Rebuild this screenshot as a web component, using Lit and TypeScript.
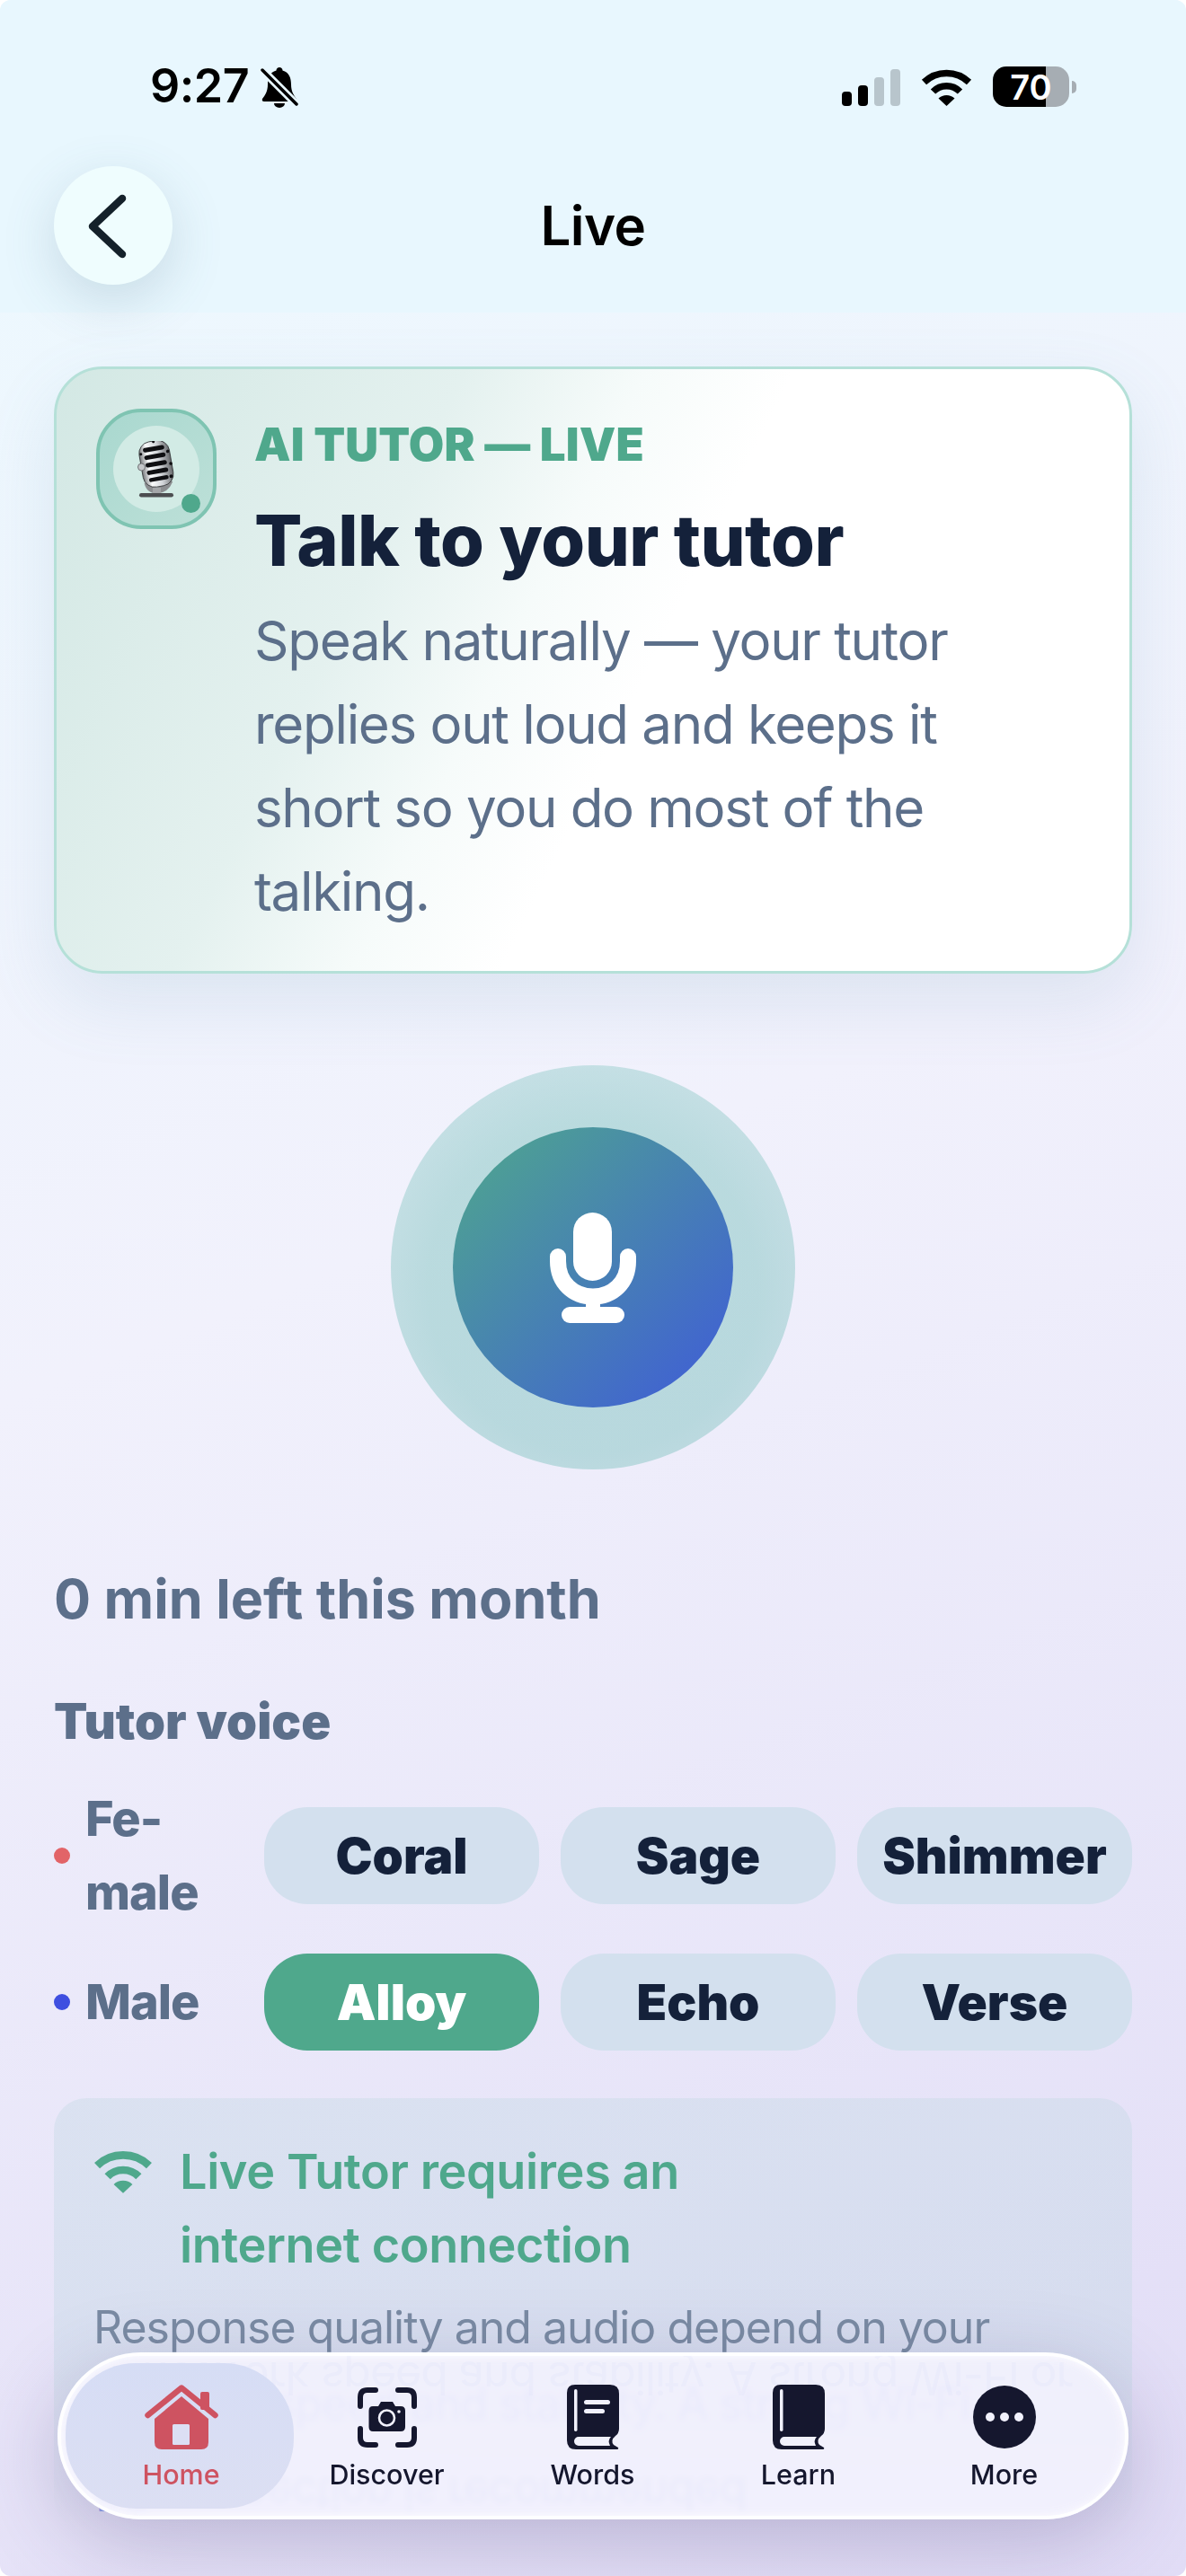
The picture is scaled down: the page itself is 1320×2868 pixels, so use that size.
import { LitElement, html, svg, css } from 'lit';
import { customElement } from 'lit/decorators.js';

const wifiIcon = () => html`
  <svg class="wifi" viewBox="0 0 57 42">
    <path d="M3.5 15.5A36 36 0 0 1 53.5 15.5" fill="none" stroke="currentColor" stroke-width="7.5" />
    <path d="M13.5 26A21 21 0 0 1 43.5 26" fill="none" stroke="currentColor" stroke-width="7.5" />
    <path d="M28.5 42L19.5 33.5A13 13 0 0 1 37.5 33.5Z" fill="currentColor" />
  </svg>
`;

const bookIcon = (lines: boolean) => html`
  <svg class="book" viewBox="0 0 58 72">
    <path d="M9 0H48Q58 0 58 10V49Q58 54 54 57Q48 62 52 67L57 70Q58 72 55 72H10Q0 72 0 62V9Q0 0 9 0Z" fill="#15172e" />
    <path d="M13 58H49Q45 62 48 68H13A5 5 0 0 1 13 58Z" fill="#f1f1fc" />
    <rect x="8" y="5" width="3.5" height="47" rx="1.75" fill="#f1f1fc" />
    ${lines
      ? svg`<rect x="19" y="17" width="29" height="5" rx="2.5" fill="#f1f1fc" />
            <rect x="19" y="27" width="23" height="5" rx="2.5" fill="#f1f1fc" />`
      : ''}
  </svg>
`;

const navItems = [
  {
    label: 'Home',
    active: true,
    icon: html`
      <svg class="home" viewBox="0 0 82 72">
        <rect x="62" y="8" width="10" height="20" rx="2" fill="#ce5361" />
        <path d="M3.5 34L41 3.5L78.5 34" fill="none" stroke="#ce5361" stroke-width="6.5" stroke-linecap="round" stroke-linejoin="round" />
        <path d="M41 13L71 38V64Q71 72 63 72H19Q11 72 11 64V38Z" fill="#ce5361" />
        <rect x="31" y="44" width="19" height="23" rx="1.5" fill="#dcdff4" />
      </svg>
    `,
  },
  {
    label: 'Discover',
    icon: html`
      <svg class="scan" viewBox="0 0 66 67">
        <g fill="none" stroke="#15172e" stroke-width="6" stroke-linecap="round">
          <path d="M3 21V11Q3 3 11 3H20" />
          <path d="M45 3H55Q63 3 63 11V21" />
          <path d="M3 46V56Q3 64 11 64H20" />
          <path d="M45 64H55Q63 64 63 56V46" />
        </g>
        <path d="M17 21H23L26 16H39L42 21H48Q53 21 53 26V44Q53 49 48 49H17Q12.500 49 12.500 44V26Q12.500 21 17 21Z" fill="#15172e" />
        <circle cx="32.500" cy="34" r="8.500" fill="#15172e" stroke="#f1f1fc" stroke-width="2.600" />
        <circle cx="46" cy="27" r="1.800" fill="#f1f1fc" />
      </svg>
    `,
  },
  { label: 'Words', icon: bookIcon(true) },
  { label: 'Learn', icon: bookIcon(false) },
  {
    label: 'More',
    icon: html`
      <svg class="more" viewBox="0 0 70 70">
        <circle cx="35" cy="35" r="35" fill="#15172e" />
        <circle cx="19" cy="35" r="5" fill="#f1f1fc" />
        <circle cx="35" cy="35" r="5" fill="#f1f1fc" />
        <circle cx="51" cy="35" r="5" fill="#f1f1fc" />
      </svg>
    `,
  },
];

@customElement('app-root')
export class AppRoot extends LitElement {
  static styles = css`
    :host {
      display: block;
      font-family: Inter, "Liberation Sans", sans-serif;
    }

    * {
      box-sizing: border-box;
    }

    svg {
      display: block;
      flex: none;
    }

    .page {
      position: relative;
      height: 2868px;
      overflow: hidden;
      border-radius: 12px;
      background: linear-gradient(158deg, #edf8fe 8%, #f1f1fc 46%, #e1dcf6 100%);
    }

    /* header */
    .header {
      height: 348px;
      padding-top: 74px;
      background: #e8f7fe;
    }

    .status {
      display: flex;
      align-items: flex-start;
      height: 48px;
      padding: 0 130px 0 167px;
    }

    .time {
      font-size: 52px;
      font-weight: 600;
      line-height: 44px;
      color: #000;
      letter-spacing: -0.5px;
    }

    .bell {
      width: 42px;
      height: 46px;
      margin-left: 13px;
    }

    .status-right {
      display: flex;
      align-items: center;
      gap: 23px;
      margin-left: auto;
    }

    .signal {
      width: 65px;
      height: 41px;
      margin-top: 2px;
    }

    .status .wifi {
      width: 57px;
      height: 42px;
      color: #000;
      margin-top: 1px;
    }

    .battery {
      position: relative;
      display: flex;
      align-items: center;
      justify-content: center;
      width: 85px;
      height: 45px;
      border-radius: 15px;
      background: linear-gradient(90deg, #000 70%, #a6adb3 70%);
      color: #fff;
      font-size: 38px;
      font-weight: 600;
    }

    .battery::after {
      content: "";
      position: absolute;
      left: 88px;
      top: 16px;
      width: 5px;
      height: 14px;
      border-radius: 0 5px 5px 0;
      background: #a6adb3;
    }

    .topbar {
      display: grid;
      grid-template-columns: 132px 1fr 132px;
      align-items: center;
      margin-top: 63px;
      padding: 0 60px;
    }

    .back {
      width: 132px;
      height: 132px;
      border-radius: 50%;
      background: #effdfe;
      box-shadow: 0 18px 60px rgba(70, 110, 130, 0.2);
    }

    .title {
      text-align: center;
      font-size: 60px;
      font-weight: 600;
      color: #000;
      letter-spacing: -0.5px;
    }

    /* content */
    .main {
      padding: 60px 60px 0;
    }

    .card {
      display: flex;
      gap: 42px;
      height: 676px;
      padding: 44px 84px 0 44px;
      border: 3px solid #b5e0d8;
      border-radius: 54px;
      background: linear-gradient(116deg, #d3e8e4 0%, #e4f1ef 30%, #f6fbfa 43%, #fff 54%);
      box-shadow: 0 30px 80px rgba(90, 140, 170, 0.14);
    }

    .card-icon {
      position: relative;
      display: flex;
      align-items: center;
      justify-content: center;
      width: 134px;
      height: 134px;
      flex: none;
      border: 4px solid #7fc4b2;
      border-radius: 50px;
      background: linear-gradient(135deg, #a9d8cf, #bde0d8);
    }

    .card-icon-inner {
      display: flex;
      align-items: center;
      justify-content: center;
      width: 96px;
      height: 96px;
      border-radius: 50%;
      background: #d2ebe5;
    }

    .mic-emoji {
      width: 43px;
      height: 63px;
    }

    .live-dot {
      position: absolute;
      right: 14px;
      bottom: 14px;
      width: 21px;
      height: 21px;
      border-radius: 50%;
      background: #4fa88c;
    }

    .kicker {
      font-size: 51px;
      font-weight: 900;
      line-height: 80px;
      color: #4fa88c;
      white-space: nowrap;
      letter-spacing: 0.2px;
    }

    .headline {
      font-size: 79px;
      font-weight: 800;
      line-height: 132px;
      color: #14213a;
      white-space: nowrap;
      letter-spacing: -0.5px;
    }

    .lead {
      margin: 0;
      font-size: 60px;
      line-height: 93px;
      color: #5c6f8a;
      letter-spacing: -1.3px;
    }

    .mic-outer {
      display: flex;
      align-items: center;
      justify-content: center;
      width: 450px;
      height: 450px;
      margin: 102px auto 0;
      border-radius: 50%;
      background: radial-gradient(circle at 50% 55%, rgba(79, 175, 165, 0.34) 55%, rgba(79, 175, 165, 0.18) 100%);
    }

    .mic-btn {
      display: flex;
      align-items: center;
      justify-content: center;
      width: 312px;
      height: 312px;
      border-radius: 50%;
      background: linear-gradient(135deg, #4fa88c 0%, #3f5bd9 100%);
    }

    .mic-btn svg {
      width: 96px;
      height: 123px;
    }

    .minutes {
      margin-top: 104px;
      font-size: 61px;
      font-weight: 700;
      line-height: 80px;
      color: #5c6f8a;
    }

    .voice-title {
      margin-top: 61px;
      font-size: 54.5px;
      font-weight: 900;
      line-height: 70px;
      color: #5c6f8a;
    }

    .voices {
      display: grid;
      grid-template-columns: 210px repeat(3, 306px);
      column-gap: 24px;
      row-gap: 27px;
      align-items: center;
      margin-top: 33px;
    }

    .voice-label {
      display: flex;
      align-items: center;
      gap: 17px;
      font-size: 54px;
      font-weight: 800;
      line-height: 82px;
      color: #5c6f8a;
      letter-spacing: -1px;
    }

    .voice-label i {
      width: 18px;
      height: 18px;
      flex: none;
      border-radius: 50%;
    }

    .female {
      background: #e26468;
    }

    .male {
      background: #3f4fe0;
    }

    .pill {
      height: 108px;
      border-radius: 48px;
      background: #d3e0ee;
      font-size: 55px;
      font-weight: 900;
      line-height: 108px;
      text-align: center;
      color: #14213a;
      white-space: nowrap;
    }

    .pill.selected {
      background: #4fa88c;
      color: #fff;
    }

    .info {
      height: 480px;
      margin-top: 53px;
      padding: 41px 44px 0;
      border-radius: 36px;
      background: linear-gradient(180deg, rgba(190, 215, 225, 0.35) 65%, rgba(190, 215, 225, 0) 100%);
    }

    .info-head {
      display: flex;
      gap: 30px;
      font-size: 54px;
      font-weight: 600;
      line-height: 82px;
      color: #4fa88c;
      letter-spacing: -0.4px;
    }

    .info-head .wifi {
      width: 66px;
      height: 49px;
      margin-top: 16px;
    }

    .info-body {
      margin: 8px 0 0;
      font-size: 50px;
      line-height: 85px;
      color: #7a8ba3;
      white-space: nowrap;
      letter-spacing: -1px;
    }

    .info-body span {
      display: block;
    }

    .info-body .under {
      color: rgba(110, 140, 230, 0.7);
    }

    .flipped {
      transform: translateY(15px) scaleY(-1);
    }

    /* floating tab bar */
    .tabbar {
      position: absolute;
      left: 64px;
      right: 64px;
      bottom: 63px;
      display: flex;
      height: 186px;
      padding: 0 19px;
      overflow: hidden;
      border: 4px solid rgba(255, 255, 255, 0.9);
      border-radius: 93px;
      background: rgba(242, 241, 253, 0.92);
      backdrop-filter: blur(3px);
      box-shadow: 0 24px 90px rgba(60, 50, 110, 0.26), inset 0 0 12px rgba(255, 255, 255, 0.8);
    }

    .echo {
      position: absolute;
      left: 90px;
      top: 0;
      font-size: 50px;
      line-height: 50px;
      color: rgba(110, 140, 230, 0.04);
      transform: scaleY(-1);
      white-space: nowrap;
      letter-spacing: -1px;
    }

    .tab {
      position: relative;
      display: flex;
      flex-direction: column;
      align-items: center;
      width: 229px;
      padding-top: 29px;
      font-size: 30.5px;
      font-weight: 500;
      line-height: 40px;
      color: #15172e;
    }

    .tab.active {
      color: #ce5361;
    }

    .tab.active::before {
      content: "";
      position: absolute;
      left: -14px;
      right: -11px;
      top: 8px;
      bottom: 8px;
      border-radius: 78px;
      background: linear-gradient(180deg, #d6ddf5, #dcdff3);
    }

    .tab-icon {
      position: relative;
      display: flex;
      align-items: center;
      justify-content: center;
      height: 78px;
      margin-bottom: 5px;
    }

    .tab span {
      position: relative;
    }

    .home {
      width: 82px;
      height: 72px;
    }

    .scan {
      width: 66px;
      height: 67px;
    }

    .book {
      width: 58px;
      height: 72px;
    }

    .more {
      width: 70px;
      height: 70px;
    }
  `;

  renderStatus() {
    return html`
      <div class="status">
        <span class="time">9:27</span>
        <svg class="bell" viewBox="0 0 42 46">
          <path d="M21 1C19 1 17.500 2.500 17.500 4.500C10 6.500 8 13 8 20C8 28 5 32 2 36Q1 39 4 39H38Q41 39 40 36C37 32 34 28 34 20C34 13 32 6.500 24.500 4.500C24.500 2.500 23 1 21 1Z" />
          <path d="M15 41A6 5 0 0 0 27 41Z" />
          <path d="M1 3L41 43" stroke="#e8f7fe" stroke-width="9" />
          <path d="M2 4L40 42" stroke="#000" stroke-width="3.500" stroke-linecap="round" />
        </svg>
        <div class="status-right">
          <svg class="signal" viewBox="0 0 65 41">
            <rect x="0" y="25" width="11" height="16" rx="4" />
            <rect x="18" y="18" width="11" height="23" rx="4" />
            <rect x="36" y="9" width="11" height="32" rx="4" fill="#b8c5cc" />
            <rect x="54" y="0" width="11" height="41" rx="4" fill="#b8c5cc" />
          </svg>
          ${wifiIcon()}
          <div class="battery">70</div>
        </div>
      </div>
    `;
  }

  renderCard() {
    return html`
      <section class="card">
        <div class="card-icon">
          <div class="card-icon-inner">
            <svg class="mic-emoji" viewBox="0 0 43 63">
              <defs>
                <linearGradient id="chrome" x1="0" y1="0" x2="1" y2="0">
                  <stop offset="0" stop-color="#77797c" />
                  <stop offset="0.25" stop-color="#fafbfc" />
                  <stop offset="0.6" stop-color="#d3d6da" />
                  <stop offset="1" stop-color="#66686b" />
                </linearGradient>
              </defs>
              <path d="M11 46Q13 55 22 55Q32 54 36 44" fill="none" stroke="#8b8d90" stroke-width="7" />
              <rect x="17" y="52" width="9" height="7" fill="#a4a6a9" />
              <rect x="2" y="58" width="38" height="4.500" rx="2.200" fill="#4c4e51" />
              <g transform="rotate(-10 20 26)">
                <rect x="4" y="0" width="34" height="51" rx="13" fill="url(#chrome)" stroke="#2e2f31" stroke-width="0.800" />
                <rect x="9" y="6" width="24" height="5" rx="2.500" fill="#0f0f12" />
                <rect x="9" y="14.500" width="24" height="5" rx="2.500" fill="#0f0f12" />
                <rect x="9" y="23" width="24" height="5" rx="2.500" fill="#0f0f12" />
                <rect x="9" y="31.500" width="24" height="5" rx="2.500" fill="#0f0f12" />
                <rect x="10" y="40" width="22" height="4.500" rx="2.200" fill="#0f0f12" />
                <circle cx="36" cy="14" r="1.800" fill="#0f0f12" />
                <circle cx="37" cy="28" r="1.800" fill="#0f0f12" />
                <circle cx="35" cy="42" r="2" fill="#0f0f12" />
                <circle cx="6" cy="12" r="1.500" fill="#0f0f12" />
                <circle cx="22" cy="0.800" r="1.500" fill="#0f0f12" />
              </g>
              <circle cx="4.500" cy="29" r="4" fill="#c4c6c9" stroke="#6f7174" />
            </svg>
          </div>
          <div class="live-dot"></div>
        </div>
        <div>
          <div class="kicker">AI TUTOR — LIVE</div>
          <div class="headline">Talk to your tutor</div>
          <p class="lead">Speak naturally — your tutor replies out loud and keeps it short so you do most of the talking.</p>
        </div>
      </section>
    `;
  }

  renderVoices() {
    return html`
      <div class="voices">
        <div class="voice-label"><i class="female"></i><span>Fe-<br />male</span></div>
        <div class="pill">Coral</div>
        <div class="pill">Sage</div>
        <div class="pill">Shimmer</div>
        <div class="voice-label"><i class="male"></i><span>Male</span></div>
        <div class="pill selected">Alloy</div>
        <div class="pill">Echo</div>
        <div class="pill">Verse</div>
      </div>
    `;
  }

  render() {
    return html`
      <div class="page">
        <header class="header">
          ${this.renderStatus()}
          <div class="topbar">
            <div class="back">
              <svg viewBox="0 0 132 132">
                <path d="M76 36L43 67L76 98" fill="none" stroke="#14212a" stroke-width="8.500" stroke-linecap="round" stroke-linejoin="round" />
              </svg>
            </div>
            <div class="title">Live</div>
          </div>
        </header>

        <main class="main">
          ${this.renderCard()}

          <div class="mic-outer">
            <div class="mic-btn">
              <svg viewBox="0 0 96 123" fill="#fff">
                <rect x="26" y="0" width="43" height="76" rx="21.500" />
                <path d="M9 49V54C9 78 26 93.500 48 93.500C70 93.500 87 78 87 54V49" fill="none" stroke="#fff" stroke-width="18" stroke-linecap="round" />
                <rect x="40" y="93" width="16" height="16" />
                <rect x="13" y="105" width="70" height="18" rx="9" />
              </svg>
            </div>
          </div>

          <div class="minutes">0 min left this month</div>
          <div class="voice-title">Tutor voice</div>
          ${this.renderVoices()}

          <section class="info">
            <div class="info-head">
              ${wifiIcon()}
              <div>Live Tutor requires an<br />internet connection</div>
            </div>
            <p class="info-body">
              <span>Response quality and audio depend on your</span>
              <span class="under">network speed and stability. A strong Wi-Fi or</span>
              <span class="under flipped">5G connection is recommended</span>
            </p>
          </section>
        </main>

        <nav class="tabbar">
          <div class="echo" aria-hidden="true">network speed and stability. A strong Wi-Fi or</div>
          ${navItems.map(
            (item) => html`
              <div class="tab ${item.active ? 'active' : ''}">
                <div class="tab-icon">${item.icon}</div>
                <span>${item.label}</span>
              </div>
            `
          )}
        </nav>
      </div>
    `;
  }
}
